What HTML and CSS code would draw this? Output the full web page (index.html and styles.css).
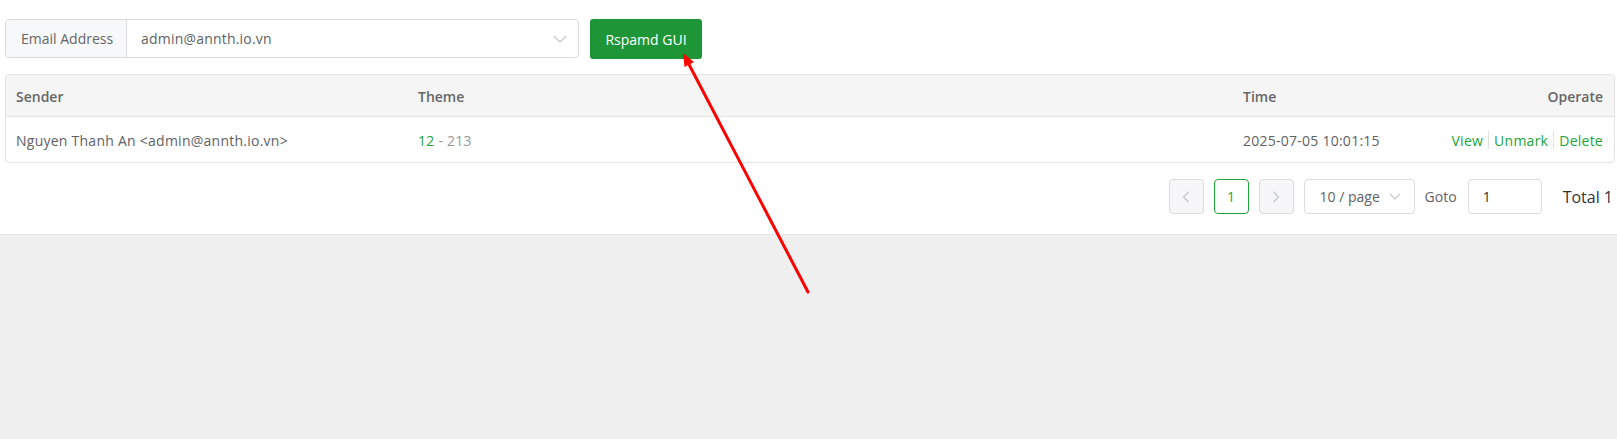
FILE: index.html
```html
<!DOCTYPE html>
<html>
<head>
<meta charset="utf-8">
<link rel="stylesheet" href="styles.css">
</head>
<body>
<div class="page">
  <div class="panel">
    <div class="toolbar">
      <div class="select-group">
        <div class="select-label">Email Address</div>
        <div class="select-value">
          <span>admin@annth.io.vn</span>
          <svg class="chev" width="14" height="8" viewBox="0 0 14 8"><path d="M1 1 L7 7 L13 1" fill="none" stroke="#c0c4cc" stroke-width="1.2"/></svg>
        </div>
      </div>
      <button class="btn-green">Rspamd GUI</button>
    </div>

    <div class="table">
      <div class="row head">
        <div class="c-sender">Sender</div>
        <div class="c-theme">Theme</div>
        <div class="c-time">Time</div>
        <div class="c-op">Operate</div>
      </div>
      <div class="row body">
        <div class="c-sender">Nguyen Thanh An &lt;admin@annth.io.vn&gt;</div>
        <div class="c-theme"><span class="num">12</span><span class="muted"> - 213</span></div>
        <div class="c-time">2025-07-05 10:01:15</div>
        <div class="c-op ops"><a>View</a><i class="sep"></i><a>Unmark</a><i class="sep"></i><a>Delete</a></div>
      </div>
    </div>

    <div class="pager">
      <div class="pbtn disabled"><svg width="8" height="12" viewBox="0 0 8 12"><path d="M6.5 1 L1.5 6 L6.5 11" fill="none" stroke="#c0c4cc" stroke-width="1.2"/></svg></div>
      <div class="pbtn active">1</div>
      <div class="pbtn disabled"><svg width="8" height="12" viewBox="0 0 8 12"><path d="M1.5 1 L6.5 6 L1.5 11" fill="none" stroke="#c0c4cc" stroke-width="1.2"/></svg></div>
      <div class="psize"><span>10 / page</span><svg width="12" height="7" viewBox="0 0 12 7"><path d="M1 1 L6 6 L11 1" fill="none" stroke="#c0c4cc" stroke-width="1.1"/></svg></div>
      <span class="goto">Goto</span>
      <div class="goto-input">1</div>
      <span class="total">Total 1</span>
    </div>
  </div>
  <div class="ground"></div>
</div>
<svg class="arrow" width="1617" height="439" viewBox="0 0 1617 439">
  <line x1="808" y1="292" x2="689" y2="64.5" stroke="#ff0000" stroke-width="3" stroke-linecap="round"/>
  <polygon points="683,53 694,62 684.5,67" fill="#ff0000"/>
</svg>
</body>
</html>
```

FILE: styles.css
```css
* { box-sizing: border-box; }
html, body { margin: 0; padding: 0; }
body {
  width: 1617px;
  height: 439px;
  overflow: hidden;
  font-family: "Open Sans", "Liberation Sans", Arial, sans-serif;
  font-size: 14px;
  color: #606266;
  background: #f0f0f0;
  position: relative;
}
.page { display: flex; flex-direction: column; height: 439px; }
.panel {
  background: #fff;
  padding: 19px 2px 20px 5px;
  border-bottom: 1px solid #e6e6e6;
}
.toolbar { display: flex; align-items: flex-start; gap: 11px; }
.select-group {
  display: flex;
  width: 574px;
  height: 39px;
  border: 1px solid #d9d9d9;
  border-radius: 4px;
  overflow: hidden;
}
.select-label {
  width: 121px;
  background: #f7f8fa;
  border-right: 1px solid #d9d9d9;
  display: flex; align-items: center;
  padding-left: 15px;
  color: #666;
}
.select-value {
  flex: 1;
  display: flex; align-items: center; justify-content: space-between;
  padding: 0 11px 0 14px;
  color: #606266;
  letter-spacing: 0.2px;
}
.chev { margin-top: 1px; }
.btn-green {
  width: 112px; height: 40px;
  border: none; border-radius: 3px;
  background: #1e9637;
  color: #fff;
  font-family: inherit; font-size: 14px;
  padding: 0;
}
.table {
  margin-top: 15px;
  border: 1px solid #e4e4e4;
  border-radius: 4px;
  overflow: hidden;
}
.row {
  display: grid;
  grid-template-columns: 402px 825px 200px 1fr;
  align-items: center;
  padding: 0 11px 0 10px;
}
.row.head {
  height: 42px;
  padding-top: 1px;
  background: #f5f5f5;
  border-bottom: 1px solid #e4e4e4;
  font-weight: 600;
  color: #666;
}
.row.body { height: 45px; padding-top: 1px; letter-spacing: 0.25px; }
.c-op { text-align: right; }
.num { color: #20a53a; }
.muted { color: #999; }
.ops { display: flex; justify-content: flex-end; align-items: center; }
.ops a { color: #20a53a; }
.sep { display: inline-block; width: 1px; height: 18px; background: #e2e2e2; margin: 0 5px; }
.pager {
  margin-top: 16px;
  display: flex;
  justify-content: flex-end;
  align-items: center;
  height: 35px;
  padding-right: 2px;
}
.pbtn {
  width: 35px; height: 35px;
  border: 1px solid #dcdcdc;
  border-radius: 4px;
  display: flex; align-items: center; justify-content: center;
  margin-right: 10px;
  background: #fff;
}
.pbtn.disabled { background: #f7f7f9; }
.pbtn.active { border-color: #20a53a; color: #20a53a; }
.psize {
  width: 111px; height: 35px;
  border: 1px solid #dcdcdc;
  border-radius: 4px;
  display: flex; align-items: center; justify-content: space-between;
  padding: 0 13px 0 15px;
  margin-right: 10px;
}
.goto { margin-right: 11px; color: #606266; }
.goto-input {
  width: 74px; height: 35px;
  border: 1px solid #dcdcdc;
  border-radius: 4px;
  display: flex; align-items: center;
  padding-left: 14px;
  color: #333;
  margin-right: 21px;
}
.total { font-size: 16px; color: #333; }
.ground { flex: 1; background: #f0f0f0; }
.arrow { position: absolute; left: 0; top: 0; pointer-events: none; }
```
